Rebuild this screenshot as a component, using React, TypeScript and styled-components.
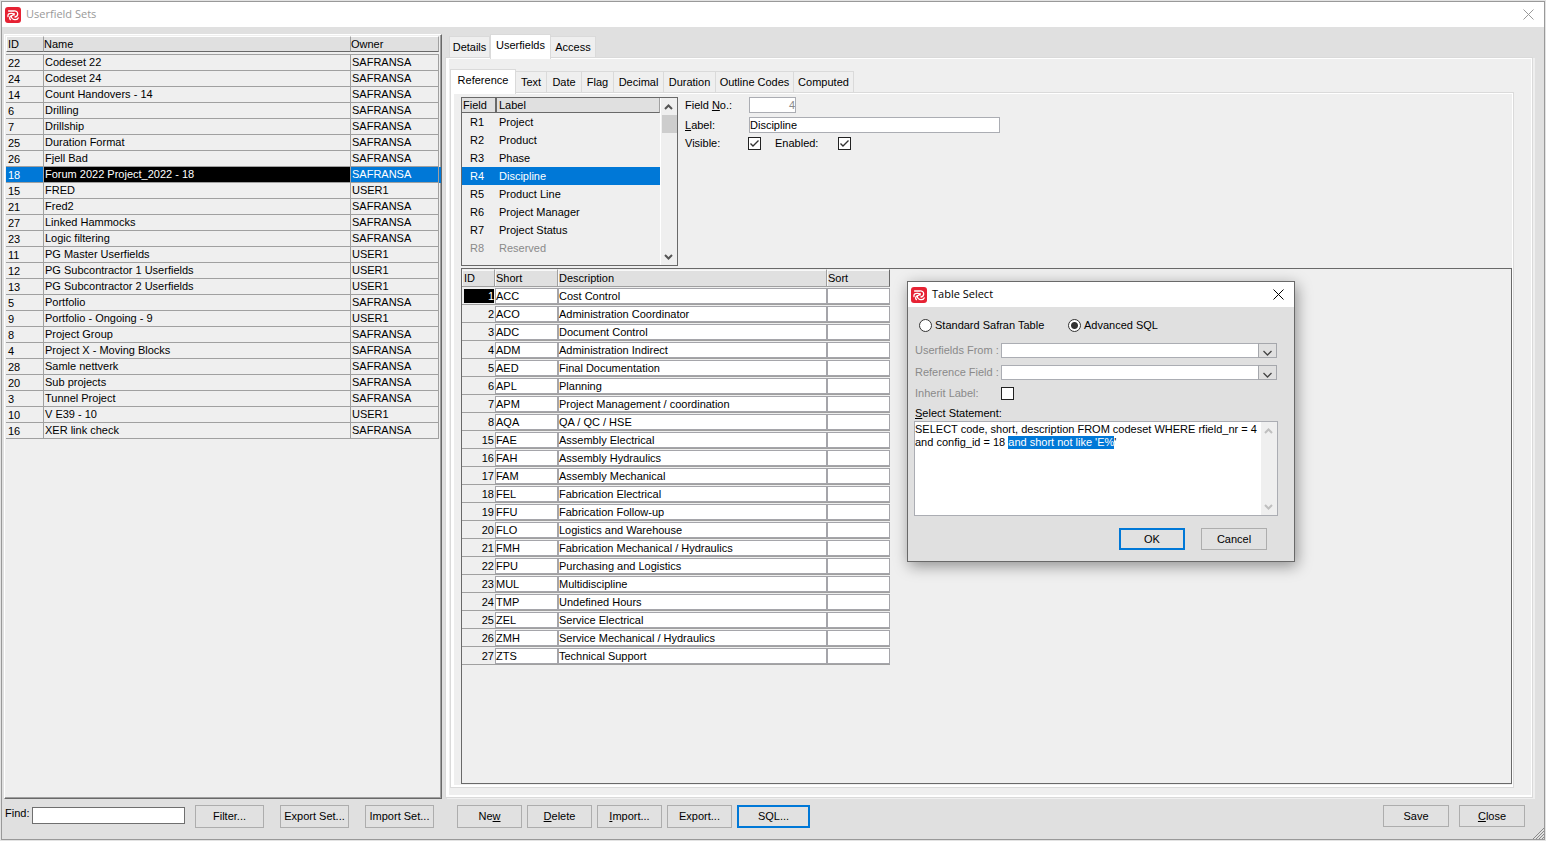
import React, { useEffect, useRef } from 'react';
import styled, { createGlobalStyle } from 'styled-components';

const face = '#e0e0e0';
const panel = '#efefef';
const line = '#a0a0a0';
const dark = '#696969';
const accent = '#0078d7';
const edge = '#dadada';

const GlobalStyle = createGlobalStyle`
  * { box-sizing: border-box; }
  body {
    margin: 0;
    background: #e3e3e3;
    color: #000;
    font: 11px/13px "Liberation Sans", Arial, sans-serif;
  }
  button, input, select, textarea { font: inherit; color: inherit; margin: 0; border-radius: 0; }
  table { border-collapse: separate; border-spacing: 0; table-layout: fixed; }
  th, td { padding: 0; font-weight: normal; text-align: left; white-space: nowrap; overflow: hidden; }
`;

const Window = styled.main`
  position: relative;
  display: flex;
  flex-direction: column;
  min-height: calc(100vh - 2px);
  margin: 1px;
  border: 1px solid #999;
  background: ${face};
`;

const TitleBar = styled.header<{ $active?: boolean }>`
  display: flex;
  align-items: center;
  gap: 5px;
  height: 25px;
  flex: none;
  padding: 0 10px 0 3px;
  background: #fff;
  color: ${(p) => (p.$active ? '#000' : '#999')};
`;

const Title = styled.h1`
  flex: 1;
  margin: 0;
  padding-bottom: 2px;
  font: 11px/16px "Open Sans", "Noto Sans", sans-serif;
`;

const CloseButton = styled.button`
  display: flex;
  padding: 0;
  border: 0;
  background: none;
`;

const Content = styled.div`
  flex: 1;
  display: grid;
  grid-template-columns: 438px minmax(0, 1fr);
  gap: 3px;
  padding: 7px 11px 0 2px;
`;

const SetsPanel = styled.section`
  border: 1px solid #fff;
  border-right-color: ${dark};
  border-bottom-color: ${dark};
  box-shadow: inset -1px -1px 0 ${line};
  background: ${panel};
  padding: 1px;
`;

const SetsTable = styled.table`
  width: 433px;
`;

const SetsHead = styled.th`
  padding-bottom: 2px;
  border-bottom: 1px solid ${line};
`;

const SetsHeadCell = styled.div`
  height: 16px;
  border: 1px solid #fff;
  border-right-color: ${line};
  border-bottom-color: ${dark};
  background: ${face};
  line-height: 14px;
  ${SetsHead}:first-child & { padding-left: 1px; }
  ${SetsHead}:not(:first-child) & { border-left: 0; }
`;

const SetsCell = styled.td`
  height: 16px;
  padding-left: 1px;
  border-right: 1px solid ${line};
  border-bottom: 1px solid ${line};
  line-height: 15px;
  &:first-child {
    padding: 1px 0 0 2px;
    line-height: 14px;
  }
`;

const SetsRow = styled.tr<{ $selected: boolean }>`
  background: ${(p) => (p.$selected ? accent : 'transparent')};
  color: ${(p) => (p.$selected ? '#fff' : '#000')};
  ${SetsCell}:nth-child(2) { background: ${(p) => (p.$selected ? '#000' : 'transparent')}; }
  ${SetsCell}:nth-child(3) { box-shadow: ${(p) => (p.$selected ? `2px 0 0 ${accent}` : 'none')}; }
`;

const Tabbed = styled.section`
  display: flex;
  flex-direction: column;
  min-width: 0;
`;

const TabStrip = styled.div<{ $indent?: boolean }>`
  display: flex;
  align-items: flex-end;
  height: 23px;
  margin-left: ${(p) => (p.$indent ? '4px' : '0')};
`;

const Tab = styled.button<{ $width: number; $selected?: boolean }>`
  width: ${(p) => p.$width}px;
  height: ${(p) => (p.$selected ? '25px' : '21px')};
  margin-bottom: ${(p) => (p.$selected ? '-2px' : '0')};
  padding: ${(p) => (p.$selected ? '0 0 3px' : '0')};
  border: 1px solid ${edge};
  border-bottom: 0;
  border-left-width: ${(p) => (p.$selected ? '1px' : '0')};
  background: ${(p) => (p.$selected ? '#fff' : panel)};
  white-space: nowrap;
  z-index: 1;
  &:first-child { border-left-width: 1px; }
`;

const OuterPage = styled.div`
  flex: 1;
  display: flex;
  flex-direction: column;
  margin-bottom: 1px;
  padding: 11px 18px 9px 4px;
  border: 1px solid ${edge};
  background: ${panel};
  box-shadow: inset 3px 1px 0 #fff, inset -1px -2px 0 #fff, 2px 1px 0 ${panel};
`;

const InnerPage = styled.div`
  flex: 1;
  display: flex;
  flex-direction: column;
  gap: 2px;
  padding: 4px 1px 3px 10px;
  border: 1px solid ${edge};
  background: ${panel};
  box-shadow: inset 3px 1px 0 #fff, inset -1px -2px 0 #fff;
`;

const Upper = styled.div`
  display: flex;
  align-items: flex-start;
  gap: 7px;
`;

const FieldList = styled.div`
  display: flex;
  width: 217px;
  height: 169px;
  border: 1px solid ${dark};
`;

const FieldTable = styled.table`
  width: 198px;
  align-self: flex-start;
`;

const FieldHead = styled.th`
  height: 15px;
  padding-left: 1px;
  border-right: 1px solid ${line};
  border-bottom: 1px solid ${dark};
  background: ${face};
  line-height: 14px;
  &:first-child { border-right: 2px solid ${dark}; }
  &:last-child { padding-left: 2px; }
`;

const FieldRow = styled.tr<{ $state?: 'selected' | 'disabled' }>`
  background: ${(p) => (p.$state === 'selected' ? accent : 'transparent')};
  color: ${(p) => (p.$state === 'selected' ? '#fff' : p.$state === 'disabled' ? '#8a8a8a' : '#000')};
`;

const FieldCell = styled.td`
  height: 18px;
  padding-left: 2px;
  &:first-child { padding-left: 8px; }
`;

const ScrollTrack = styled.div<{ $muted?: boolean }>`
  display: flex;
  flex-direction: column;
  align-items: center;
  width: 17px;
  flex: none;
  background: ${panel};
  border-left: 1px solid #fff;
  color: ${(p) => (p.$muted ? '#bfbfbf' : '#555')};
`;

const ScrollArrow = styled.button`
  display: flex;
  align-items: center;
  justify-content: center;
  width: 16px;
  height: 17px;
  padding: 0 1px 0 0;
  border: 0;
  background: none;
`;

const ScrollSpace = styled.div`
  flex: 1;
`;

const ScrollThumb = styled.div`
  width: 15px;
  height: 18px;
  background: #cdcdcd;
`;

const Form = styled.div`
  flex: 1;
  display: grid;
  grid-template-columns: 64px 1fr;
  grid-template-rows: 16px 16px 13px;
  row-gap: 4px;
  align-items: center;
  min-width: 0;
`;

const TextBox = styled.input<{ $width: number; $tall?: boolean; $strong?: boolean }>`
  width: ${(p) => p.$width}px;
  height: ${(p) => (p.$tall ? 17 : 16)}px;
  padding: 0;
  border: 1px solid ${(p) => (p.$strong ? '#6f6f6f' : '#abadb3')};
  background: #fff;
  outline: none;
  &:disabled { color: #8a8a8a; text-align: right; }
`;

const CheckPair = styled.div`
  display: flex;
  align-items: center;
  gap: 14px;
  margin-left: -1px;
`;

const CheckLabel = styled.label`
  width: 49px;
`;

const CheckFrame = styled.span`
  display: grid;
  width: 13px;
  height: 13px;
  & > * { grid-area: 1 / 1; }
  & > svg { pointer-events: none; }
`;

const CheckInput = styled.input`
  appearance: none;
  width: 13px;
  height: 13px;
  border: 1px solid #222;
  background: #fff;
`;

const CodesFrame = styled.div`
  flex: 1;
  border: 1px solid ${dark};
`;

const CodesTable = styled.table`
  width: 428px;
`;

const CodesHead = styled.th`
  height: 18px;
  padding: 1px 0 0 1px;
  border-top: 1px solid ${panel};
  border-right: 1px solid ${line};
  border-bottom: 1px solid ${line};
  background: ${face};
  box-shadow: inset 1px 1px 0 #f8f8f8;
  &:first-child { padding-left: 2px; }
  &:last-child { border-right-color: ${dark}; }
`;

const CodesCell = styled.td`
  height: 18px;
  border-bottom: 1px solid ${line};
`;

const CodesNumber = styled.div<{ $selected: boolean }>`
  height: 14px;
  margin: 1px 1px 0 2px;
  text-align: right;
  line-height: 14px;
  background: ${(p) => (p.$selected ? '#000' : 'transparent')};
  color: ${(p) => (p.$selected ? '#fff' : '#000')};
`;

const CodesBox = styled.div`
  height: 16px;
  margin-top: 1px;
  border: 1px solid #a5a5aa;
  background: #fff;
  line-height: 14px;
`;

const Footer = styled.footer`
  display: flex;
  align-items: flex-start;
  justify-content: space-between;
  height: 40px;
  flex: none;
  padding: 6px 19px 0 3px;
`;

const FooterGroup = styled.div<{ $gap: number }>`
  display: flex;
  gap: ${(p) => p.$gap}px;
`;

const FindField = styled.div`
  display: flex;
  gap: 5px;
  padding-top: 2px;
  margin-right: -6px;
`;

const FindLabel = styled.label`
  width: 22px;
`;

const PushButton = styled.button<{ $width: number; $height?: number; $primary?: boolean }>`
  width: ${(p) => p.$width}px;
  height: ${(p) => p.$height ?? 23}px;
  padding: 0;
  border: ${(p) => (p.$primary ? `2px solid ${accent}` : '1px solid #adadad')};
  background: #e1e1e1;
  white-space: nowrap;
`;

const Grip = styled.svg`
  position: absolute;
  right: 0;
  bottom: 0;
`;

const Dialog = styled.section`
  position: absolute;
  top: 279px;
  left: 905px;
  z-index: 2;
  width: 388px;
  border: 1px solid ${dark};
  background: ${face};
  box-shadow: 2px 4px 14px rgba(0, 0, 0, 0.4);
`;

const DialogBody = styled.form`
  padding: 12px 16px 11px 6px;
`;

const RadioRow = styled.div`
  display: flex;
  padding-left: 5px;
`;

const RadioLabel = styled.label<{ $width: number }>`
  display: flex;
  align-items: center;
  gap: 3px;
  width: ${(p) => p.$width}px;
`;

const RadioInput = styled.input`
  appearance: none;
  width: 13px;
  height: 13px;
  border: 1px solid #333;
  border-radius: 50%;
  background: #fff;
  &:checked { background: radial-gradient(circle, #333 3px, #fff 4px); }
`;

const DialogGrid = styled.div`
  display: grid;
  grid-template-columns: 87px 1fr;
  grid-template-rows: 15px 15px 13px;
  row-gap: 7px;
  align-items: center;
  margin-top: 11px;
`;

const DialogLabel = styled.label<{ $disabled?: boolean }>`
  padding-left: 1px;
  color: ${(p) => (p.$disabled ? '#8a8a8a' : '#000')};
`;

const StatementLabel = styled(DialogLabel)`
  display: block;
  margin-top: 7px;
`;

const SelectFrame = styled.span`
  display: grid;
  grid-template-columns: 1fr 19px;
  height: 15px;
  margin-right: 1px;
`;

const SelectBox = styled.select`
  grid-area: 1 / 1 / 2 / 3;
  appearance: none;
  border: 1px solid #abadb3;
  background: #fff;
  padding: 0;
  opacity: 1;
`;

const SelectArrow = styled.span`
  grid-area: 1 / 2;
  display: flex;
  align-items: flex-end;
  justify-content: center;
  border: 1px solid #a5a7ac;
  background: ${face};
  pointer-events: none;
`;

const StatementFrame = styled.div`
  display: flex;
  height: 95px;
  margin-top: 1px;
  border: 1px solid #abadb3;
  background: #fff;
`;

const Statement = styled.textarea`
  flex: 1;
  min-width: 0;
  padding: 1px 0;
  border: 0;
  outline: none;
  resize: none;
  overflow: hidden;
  background: #fff;
  &::selection { background: ${accent}; color: #fff; }
`;

const DialogButtons = styled.div`
  display: flex;
  justify-content: flex-end;
  gap: 16px;
  margin-top: 12px;
  padding-right: 11px;
`;

const Logo = () => (
  <svg width="16" height="16" viewBox="0 0 16 16" aria-hidden="true">
    <rect width="16" height="16" rx="3" fill="#e62233" />
    <g fill="none" stroke="#fff" strokeWidth="1.3" strokeLinecap="round">
      <path d="M3.6 4H8.5C11 3.6 12.7 5 12.7 7C12.7 8.6 11.6 9.7 10 10" />
      <path d="M3 9.6C2.6 7.6 3.8 6.4 5.5 6.4C7.6 6.1 9 6.5 9.3 7.8" />
      <path d="M5.4 12.6C4 11.6 4.6 9.6 6.3 8.9C7.8 8.4 9.2 7.6 9.2 6.6" />
      <path d="M6.3 9C6.3 11 8 12.7 10 12.7C11.4 12.7 12.7 12 13.2 10.9" />
    </g>
  </svg>
);

const Cross = () => (
  <svg width="11" height="11" viewBox="0 0 11 11" aria-hidden="true">
    <path d="M.5 .5L10.5 10.5M10.5 .5L.5 10.5" stroke="currentColor" fill="none" />
  </svg>
);

const Chevron = ({ up = false }: { up?: boolean }) => (
  <svg width="9" height="6" viewBox="0 0 9 6" aria-hidden="true">
    <path d={up ? 'M1 5L4.5 1.5L8 5' : 'M1 1L4.5 4.5L8 1'} stroke="currentColor" strokeWidth="2" fill="none" />
  </svg>
);

const ScrollBar = ({ muted = false }: { muted?: boolean }) => (
  <ScrollTrack $muted={muted}>
    <ScrollArrow type="button" aria-label="Scroll up"><Chevron up /></ScrollArrow>
    {!muted && <ScrollThumb />}
    <ScrollSpace />
    <ScrollArrow type="button" aria-label="Scroll down"><Chevron /></ScrollArrow>
  </ScrollTrack>
);

const CheckBox = ({ id, checked = false, disabled = false }: { id: string; checked?: boolean; disabled?: boolean }) => (
  <CheckFrame>
    <CheckInput id={id} type="checkbox" defaultChecked={checked} disabled={disabled} />
    {checked && (
      <svg width="13" height="13" viewBox="0 0 13 13" aria-hidden="true">
        <path d="M2.5 6.5L5 9L10.5 3.5" stroke="#333" strokeWidth="1.4" fill="none" />
      </svg>
    )}
  </CheckFrame>
);

const DropDown = ({ id }: { id: string }) => (
  <SelectFrame>
    <SelectBox id={id} disabled />
    <SelectArrow>
      <svg width="9" height="7" viewBox="0 0 9 7" aria-hidden="true">
        <path d="M.5 1L4.5 5L8.5 1" stroke="#444" strokeWidth="1.3" fill="none" />
      </svg>
    </SelectArrow>
  </SelectFrame>
);

const sets: [number, string, string][] = [
  [22, 'Codeset 22', 'SAFRANSA'],
  [24, 'Codeset 24', 'SAFRANSA'],
  [14, 'Count Handovers - 14', 'SAFRANSA'],
  [6, 'Drilling', 'SAFRANSA'],
  [7, 'Drillship', 'SAFRANSA'],
  [25, 'Duration Format', 'SAFRANSA'],
  [26, 'Fjell Bad', 'SAFRANSA'],
  [18, 'Forum 2022 Project_2022 - 18', 'SAFRANSA'],
  [15, 'FRED', 'USER1'],
  [21, 'Fred2', 'SAFRANSA'],
  [27, 'Linked Hammocks', 'SAFRANSA'],
  [23, 'Logic filtering', 'SAFRANSA'],
  [11, 'PG Master Userfields', 'USER1'],
  [12, 'PG Subcontractor 1 Userfields', 'USER1'],
  [13, 'PG Subcontractor 2 Userfields', 'USER1'],
  [5, 'Portfolio', 'SAFRANSA'],
  [9, 'Portfolio - Ongoing - 9', 'USER1'],
  [8, 'Project Group', 'SAFRANSA'],
  [4, 'Project X - Moving Blocks', 'SAFRANSA'],
  [28, 'Samle nettverk', 'SAFRANSA'],
  [20, 'Sub projects', 'SAFRANSA'],
  [3, 'Tunnel Project', 'SAFRANSA'],
  [10, 'V E39 - 10', 'USER1'],
  [16, 'XER link check', 'SAFRANSA'],
];

const mainTabs = [
  { name: 'Details', width: 41 },
  { name: 'Userfields', width: 61, selected: true },
  { name: 'Access', width: 45 },
];

const fieldTabs = [
  { name: 'Reference', width: 66, selected: true },
  { name: 'Text', width: 31 },
  { name: 'Date', width: 35 },
  { name: 'Flag', width: 32 },
  { name: 'Decimal', width: 50 },
  { name: 'Duration', width: 52 },
  { name: 'Outline Codes', width: 78 },
  { name: 'Computed', width: 60 },
];

const fields: { code: string; label: string; state?: 'selected' | 'disabled' }[] = [
  { code: 'R1', label: 'Project' },
  { code: 'R2', label: 'Product' },
  { code: 'R3', label: 'Phase' },
  { code: 'R4', label: 'Discipline', state: 'selected' },
  { code: 'R5', label: 'Product Line' },
  { code: 'R6', label: 'Project Manager' },
  { code: 'R7', label: 'Project Status' },
  { code: 'R8', label: 'Reserved', state: 'disabled' },
];

const codes: [number, string, string][] = [
  [1, 'ACC', 'Cost Control'],
  [2, 'ACO', 'Administration Coordinator'],
  [3, 'ADC', 'Document Control'],
  [4, 'ADM', 'Administration Indirect'],
  [5, 'AED', 'Final Documentation'],
  [6, 'APL', 'Planning'],
  [7, 'APM', 'Project Management / coordination'],
  [8, 'AQA', 'QA / QC / HSE'],
  [15, 'FAE', 'Assembly Electrical'],
  [16, 'FAH', 'Assembly Hydraulics'],
  [17, 'FAM', 'Assembly Mechanical'],
  [18, 'FEL', 'Fabrication Electrical'],
  [19, 'FFU', 'Fabrication Follow-up'],
  [20, 'FLO', 'Logistics and Warehouse'],
  [21, 'FMH', 'Fabrication Mechanical / Hydraulics'],
  [22, 'FPU', 'Purchasing and Logistics'],
  [23, 'MUL', 'Multidiscipline'],
  [24, 'TMP', 'Undefined Hours'],
  [25, 'ZEL', 'Service Electrical'],
  [26, 'ZMH', 'Service Mechanical / Hydraulics'],
  [27, 'ZTS', 'Technical Support'],
];

const query =
  "SELECT code, short, description FROM codeset WHERE rfield_nr = 4 and config_id = 18 and short not like 'E%'";
const condition = "and short not like 'E%";

const TableSelect = () => {
  const statement = useRef<HTMLTextAreaElement>(null);

  useEffect(() => {
    const start = query.indexOf(condition);
    statement.current?.focus();
    statement.current?.setSelectionRange(start, start + condition.length);
  }, []);

  return (
    <Dialog role="dialog" aria-label="Table Select">
      <TitleBar $active>
        <Logo />
        <Title as="h2">Table Select</Title>
        <CloseButton type="button" aria-label="Close dialog"><Cross /></CloseButton>
      </TitleBar>
      <DialogBody onSubmit={(e) => e.preventDefault()}>
        <RadioRow>
          <RadioLabel $width={149}>
            <RadioInput type="radio" name="source" />
            Standard Safran Table
          </RadioLabel>
          <RadioLabel $width={110}>
            <RadioInput type="radio" name="source" defaultChecked />
            Advanced SQL
          </RadioLabel>
        </RadioRow>
        <DialogGrid>
          <DialogLabel $disabled htmlFor="from">Userfields From :</DialogLabel>
          <DropDown id="from" />
          <DialogLabel $disabled htmlFor="reference">Reference Field :</DialogLabel>
          <DropDown id="reference" />
          <DialogLabel $disabled htmlFor="inherit">Inherit Label:</DialogLabel>
          <CheckBox id="inherit" disabled />
        </DialogGrid>
        <StatementLabel htmlFor="statement"><u>S</u>elect Statement:</StatementLabel>
        <StatementFrame>
          <Statement id="statement" ref={statement} defaultValue={query} spellCheck={false} />
          <ScrollBar muted />
        </StatementFrame>
        <DialogButtons>
          <PushButton $width={66} $height={22} $primary>OK</PushButton>
          <PushButton type="button" $width={66} $height={22}>Cancel</PushButton>
        </DialogButtons>
      </DialogBody>
    </Dialog>
  );
};

export default function App() {
  return (
    <>
      <GlobalStyle />
      <Window>
        <TitleBar>
          <Logo />
          <Title>Userfield Sets</Title>
          <CloseButton type="button" aria-label="Close window"><Cross /></CloseButton>
        </TitleBar>
        <Content>
          <SetsPanel>
            <SetsTable>
              <colgroup>
                <col width="38" />
                <col width="307" />
                <col width="88" />
              </colgroup>
              <thead>
                <tr>
                  {['ID', 'Name', 'Owner'].map((h) => (
                    <SetsHead key={h} scope="col"><SetsHeadCell>{h}</SetsHeadCell></SetsHead>
                  ))}
                </tr>
              </thead>
              <tbody>
                {sets.map(([id, name, owner]) => (
                  <SetsRow key={id} $selected={id === 18}>
                    <SetsCell>{id}</SetsCell>
                    <SetsCell>{name}</SetsCell>
                    <SetsCell>{owner}</SetsCell>
                  </SetsRow>
                ))}
              </tbody>
            </SetsTable>
          </SetsPanel>
          <Tabbed>
            <TabStrip role="tablist" $indent>
              {mainTabs.map((t) => (
                <Tab key={t.name} type="button" role="tab" aria-selected={!!t.selected} $width={t.width} $selected={t.selected}>
                  {t.name}
                </Tab>
              ))}
            </TabStrip>
            <OuterPage role="tabpanel">
              <TabStrip role="tablist">
                {fieldTabs.map((t) => (
                  <Tab key={t.name} type="button" role="tab" aria-selected={!!t.selected} $width={t.width} $selected={t.selected}>
                    {t.name}
                  </Tab>
                ))}
              </TabStrip>
              <InnerPage role="tabpanel">
                <Upper>
                  <FieldList>
                    <FieldTable>
                      <colgroup>
                        <col width="35" />
                        <col width="163" />
                      </colgroup>
                      <thead>
                        <tr>
                          <FieldHead scope="col">Field</FieldHead>
                          <FieldHead scope="col">Label</FieldHead>
                        </tr>
                      </thead>
                      <tbody>
                        {fields.map((f) => (
                          <FieldRow key={f.code} $state={f.state}>
                            <FieldCell>{f.code}</FieldCell>
                            <FieldCell>{f.label}</FieldCell>
                          </FieldRow>
                        ))}
                      </tbody>
                    </FieldTable>
                    <ScrollBar />
                  </FieldList>
                  <Form>
                    <label htmlFor="number">Field <u>N</u>o.:</label>
                    <TextBox id="number" $width={47} defaultValue="4" disabled />
                    <label htmlFor="label"><u>L</u>abel:</label>
                    <TextBox id="label" $width={251} defaultValue="Discipline" />
                    <label htmlFor="visible">Visible:</label>
                    <CheckPair>
                      <CheckBox id="visible" checked />
                      <CheckLabel htmlFor="enabled">Enabled:</CheckLabel>
                      <CheckBox id="enabled" checked />
                    </CheckPair>
                  </Form>
                </Upper>
                <CodesFrame>
                  <CodesTable>
                    <colgroup>
                      <col width="33" />
                      <col width="63" />
                      <col width="269" />
                      <col width="63" />
                    </colgroup>
                    <thead>
                      <tr>
                        {['ID', 'Short', 'Description', 'Sort'].map((h) => (
                          <CodesHead key={h} scope="col">{h}</CodesHead>
                        ))}
                      </tr>
                    </thead>
                    <tbody>
                      {codes.map(([id, short, description]) => (
                        <tr key={id}>
                          <CodesCell><CodesNumber $selected={id === 1}>{id}</CodesNumber></CodesCell>
                          <CodesCell><CodesBox>{short}</CodesBox></CodesCell>
                          <CodesCell><CodesBox>{description}</CodesBox></CodesCell>
                          <CodesCell><CodesBox /></CodesCell>
                        </tr>
                      ))}
                    </tbody>
                  </CodesTable>
                </CodesFrame>
              </InnerPage>
            </OuterPage>
          </Tabbed>
        </Content>
        <Footer>
          <FooterGroup $gap={23}>
            <FooterGroup $gap={16}>
              <FindField>
                <FindLabel htmlFor="find">Find:</FindLabel>
                <TextBox id="find" $width={153} $tall $strong />
              </FindField>
              <PushButton $width={69}>Filter...</PushButton>
              <PushButton $width={69}>Export Set...</PushButton>
              <PushButton $width={69}>Import Set...</PushButton>
            </FooterGroup>
            <FooterGroup $gap={5}>
              <PushButton $width={65}>Ne<u>w</u></PushButton>
              <PushButton $width={65}><u>D</u>elete</PushButton>
              <PushButton $width={65}><u>I</u>mport...</PushButton>
              <PushButton $width={65}>Export...</PushButton>
              <PushButton $width={73} $primary>SQL...</PushButton>
            </FooterGroup>
          </FooterGroup>
          <FooterGroup $gap={10}>
            <PushButton $width={66} $height={22}>Save</PushButton>
            <PushButton $width={66} $height={22}><u>C</u>lose</PushButton>
          </FooterGroup>
        </Footer>
        <Grip width="12" height="12" viewBox="0 0 12 12" aria-hidden="true">
          <path d="M1 12L12 1M4 12L12 4M7 12L12 7M10 12L12 10" stroke="#8a8a8a" fill="none" />
        </Grip>
        <TableSelect />
      </Window>
    </>
  );
}
